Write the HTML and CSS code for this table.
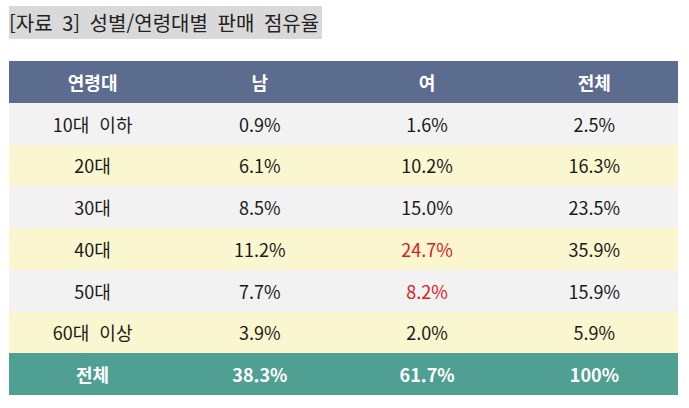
FILE: index.html
```html
<!DOCTYPE html>
<html lang="ko">
<head>
<meta charset="utf-8">
<link rel="stylesheet" href="styles.css">
</head>
<body>
<div class="page">
  <div class="title">[자료 3] 성별/연령대별 판매 점유율</div>
  <div class="table">
    <div class="row head"><div>연령대</div><div>남</div><div>여</div><div>전체</div></div>
    <div class="row gray"><div>10대 이하</div><div>0.9%</div><div>1.6%</div><div>2.5%</div></div>
    <div class="row yellow"><div>20대</div><div>6.1%</div><div>10.2%</div><div>16.3%</div></div>
    <div class="row gray"><div>30대</div><div>8.5%</div><div>15.0%</div><div>23.5%</div></div>
    <div class="row yellow"><div>40대</div><div>11.2%</div><div class="red">24.7%</div><div>35.9%</div></div>
    <div class="row gray"><div>50대</div><div>7.7%</div><div class="red">8.2%</div><div>15.9%</div></div>
    <div class="row yellow"><div>60대 이상</div><div>3.9%</div><div>2.0%</div><div>5.9%</div></div>
    <div class="row total"><div>전체</div><div>38.3%</div><div>61.7%</div><div>100%</div></div>
  </div>
</div>
</body>
</html>
```
FILE: styles.css
```css
html, body {
  margin: 0;
  padding: 0;
  background: #ffffff;
}
.page {
  padding: 6px 0 0 9px;
  font-family: "Noto Sans CJK KR", "Noto Sans", sans-serif;
  color: #1a1a1a;
}
.title {
  display: inline-block;
  background: #d9d9d9;
  font-size: 20px;
  line-height: 33px;
  height: 33px;
  padding: 0 3px 0 0;
  word-spacing: 4px;
  color: #222;
}
.table {
  margin-top: 22px;
  width: 669px;
  display: flex;
  flex-direction: column;
}
.row {
  display: grid;
  grid-template-columns: repeat(4, 1fr);
  height: 41.75px;
  align-items: center;
  text-align: center;
  font-size: 18px;
  word-spacing: 5px;
}
.head {
  background: #5b6c8f;
  color: #ffffff;
  font-weight: bold;
}
.gray { background: #f2f2f2; }
.yellow { background: #faf6cf; }
.total {
  background: #4f9f92;
  color: #ffffff;
  font-weight: bold;
}
.red { color: #d92121; }
```
